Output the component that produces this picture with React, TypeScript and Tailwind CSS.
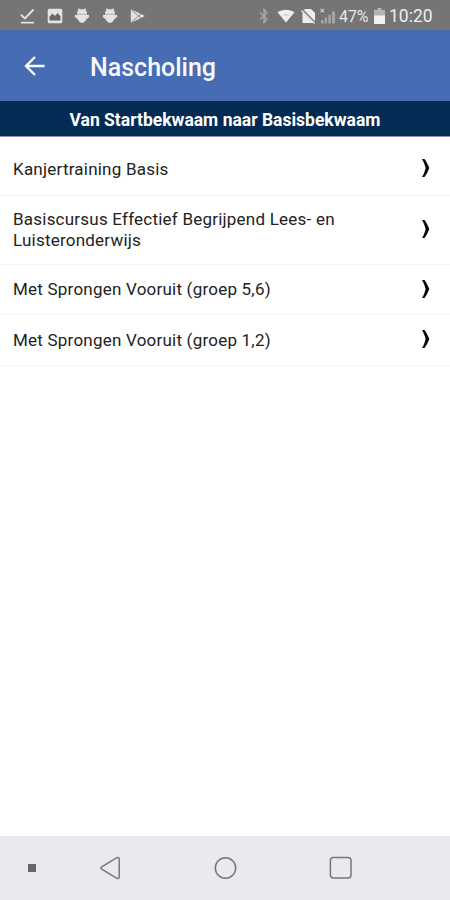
interface Course {
  id: number
  title: string
  rowClass: string
}

const courses: Course[] = [
  { id: 1, title: 'Kanjertraining Basis', rowClass: 'h-[59px] pt-[6px]' },
  { id: 2, title: 'Basiscursus Effectief Begrijpend Lees- en Luisteronderwijs', rowClass: 'h-[69px]' },
  { id: 3, title: 'Met Sprongen Vooruit (groep 5,6)', rowClass: 'h-[50px]' },
  { id: 4, title: 'Met Sprongen Vooruit (groep 1,2)', rowClass: 'h-[51px]' },
]

function DebugIcon() {
  return (
    <svg width="16" height="16" viewBox="0 0 16 16" fill="#e3e3e3">
      <path d="M3 6C3 4.2 3.5 2.800 4.500 2L4 .8l.8-.5 1.300 1h3.800L11.200.3l.8.5-.5 1.200C12.500 2.800 13 4.200 13 6z" />
      <path d="M.9 7h14.200v2.500h-1.600V11h-1.200c-.6 2-2 3.600-4.300 4.100-2.300-.5-3.700-2.100-4.300-4.100H2.500V9.500H.9z" />
      <path d="M3 6.300h10" stroke="#bdbdbd" strokeWidth="1.4" />
    </svg>
  )
}

function StatusBar() {
  return (
    <div className="flex h-[30px] shrink-0 items-center bg-[#757575] pt-[2px] pl-5 pr-[18px]">
      <div className="flex items-center">
        <svg width="15" height="16" viewBox="0 0 15 16" fill="none" stroke="#e3e3e3" strokeWidth="1.9">
          <path d="M1 6.8 5 10.5 13.5 1.5M1 14.6h13" />
        </svg>
        <svg className="ml-[12px]" width="16" height="16" viewBox="0 0 16 16">
          <rect x=".7" y=".7" width="14.6" height="14.6" rx="1.5" fill="#e3e3e3" />
          <path d="M2.500 12.500V8.500L5.500 5.500l2.300 2.500 3-3 2.700 3.500v4z" fill="#686868" />
        </svg>
        <div className="ml-[11px] flex gap-[12px]">
          <DebugIcon />
          <DebugIcon />
        </div>
        <svg className="ml-[12px]" width="16" height="16" viewBox="0 0 16 16">
          <path d="M.8.9 15 8 .8 15.100z" fill="#e3e3e3" />
          <path d="M1 1.500 11 10M1 14.500 11 6" fill="none" stroke="#858585" strokeWidth="1" />
        </svg>
      </div>

      <div className="ml-auto flex items-center">
        <svg width="10" height="16" viewBox="0 0 10 16" fill="none" stroke="#adadad" strokeWidth="1.3">
          <path d="M1 4.500 8 11l-3 3.500v-13L8 5l-7 6.500" />
        </svg>
        <svg className="ml-[8px]" width="18" height="16" viewBox="0 0 18 16">
          <path d="M.5 4.300C5 .8 13 .8 17.500 4.300L9 14.500z" fill="#eeeeee" />
          <path d="M6.500 7.500c1.500-1 3.500-1 5 0" fill="none" stroke="#c4c4c4" />
        </svg>
        <svg className="ml-[6px]" width="15" height="16" viewBox="0 0 15 16">
          <path d="M4 1h6l4 4v10H1.500V3.500z" fill="#eeeeee" />
          <path d="M.5 1.500 14.500 15.500" stroke="#757575" strokeWidth="2.6" />
          <path d="M.5 2.500 13.500 15.500" stroke="#eeeeee" strokeWidth="1.2" />
        </svg>
        <svg className="ml-[3px]" width="18" height="17" viewBox="0 0 18 17">
          <path d="m1.500.8 3.600 3.600m0-3.600L1.500 4.400" stroke="#d2d2d2" strokeWidth="1.1" />
          <path d="M2 12h2.500v3.500H2zM5.600 9.500h2.500v6H5.600zM9.300 6.800h2.500v8.700H9.300zM13 3.500h3v12h-3z" fill="#a4a4a4" />
        </svg>
        <span className="ml-[2px] w-[31px] pt-px text-[16px] leading-none tracking-[-0.1px] text-[#e8e8e8]">47%</span>
        <svg className="ml-[4px]" width="11" height="16" viewBox="0 0 11 16">
          <path d="M3.500 0h4v2H11v6H0V2h3.500z" fill="#b5b5b5" />
          <path d="M0 7.500h11V16H0z" fill="#f1f1f1" />
        </svg>
        <span className="ml-[4px] w-[43px] pt-px text-[17.5px] leading-none text-[#eeeeee]">10:20</span>
      </div>
    </div>
  )
}

function CourseRow({ course }: { course: Course }) {
  return (
    <li className={`flex items-center border-b border-[#f3f3f3] pl-[13px] pr-[20px] ${course.rowClass}`}>
      <span className="w-[345px] text-[17px] leading-[21px] tracking-[0.22px] text-[#222222]">{course.title}</span>
      <svg className="ml-auto mb-[2px]" width="9" height="20" viewBox="0 0 9 20" fill="#0a0a0a">
        <path d="M1 .9h2.500C5.500 3.400 6.900 6.500 8.300 10c-1.400 3.500-2.800 6.600-4.800 9.100H1C2.700 16.200 3.900 13.200 4.600 10 3.900 6.800 2.700 3.800 1 .9z" />
      </svg>
    </li>
  )
}

function NavigationBar() {
  return (
    <nav className="flex h-16 shrink-0 items-center bg-[#e8eaed] pl-[28px] text-[#777777]">
      <span className="size-2 bg-[#666666]" />
      <svg className="ml-[63px]" width="23" height="24" viewBox="0 0 23 24" fill="none" stroke="currentColor" strokeWidth="1.5">
        <path d="M2.300 11.200 18 1.700q2-.8 2.200 1.300v18q-.2 2.100-2.200 1.300L2.300 12.800q-1-.8 0-1.600z" />
      </svg>
      <svg className="ml-[91px]" width="24" height="24" viewBox="0 0 24 24" fill="none" stroke="currentColor" strokeWidth="1.5">
        <circle cx="12.5" cy="12" r="10.2" />
      </svg>
      <svg className="ml-[92px]" width="24" height="24" viewBox="0 0 24 24" fill="none" stroke="currentColor" strokeWidth="1.5">
        <rect x="1.4" y="1.4" width="20.6" height="20.6" rx="3" />
      </svg>
    </nav>
  )
}

export default function App() {
  return (
    <div className="flex h-[900px] w-[450px] flex-col overflow-hidden bg-white font-[Roboto,sans-serif]">
      <StatusBar />
      <header className="flex h-[71px] shrink-0 items-center bg-[#466db3] pl-[24px]">
        <button aria-label="Terug">
          <svg width="22" height="22" viewBox="0 0 22 22" fill="none" stroke="#f7f9ff" strokeWidth="2.4">
            <path d="M20.500 11H2.500M11 2 2 11l9 9" />
          </svg>
        </button>
        <h1 className="ml-[44px] pt-[4px] text-[25px] font-medium leading-none text-[#f7f9ff]">Nascholing</h1>
      </header>
      <h2 className="flex h-[36px] shrink-0 items-center justify-center border-b border-[#8b90ad] bg-[#032b54] pt-[4px] text-[17.5px] font-bold text-white">
        Van Startbekwaam naar Basisbekwaam
      </h2>
      <ul className="flex-1">
        {courses.map(course => (
          <CourseRow key={course.id} course={course} />
        ))}
      </ul>
      <NavigationBar />
    </div>
  )
}
